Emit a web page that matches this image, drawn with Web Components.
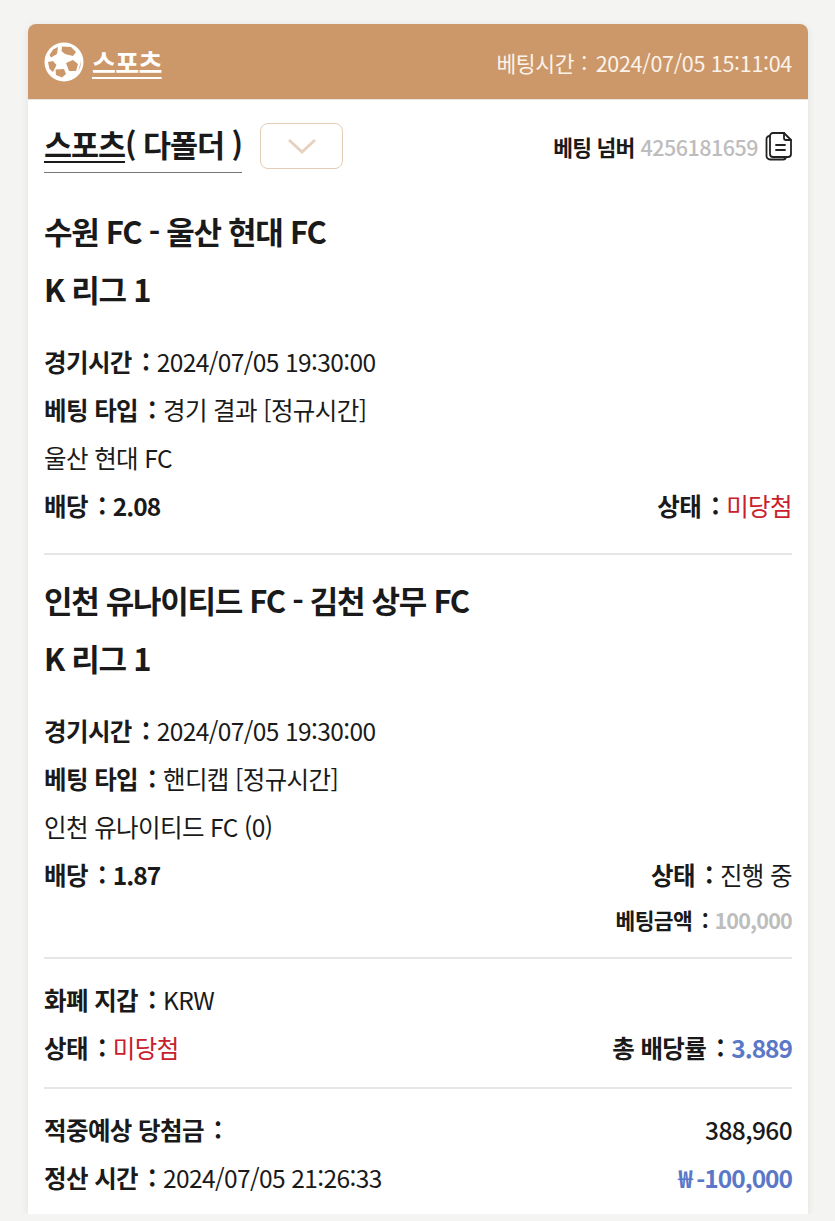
<!DOCTYPE html>
<html lang="ko">
<head>
<meta charset="utf-8">
<style>
  html, body { margin: 0; padding: 0; background: #f4f4f3; }
  body { font-family: "Noto Sans CJK KR", "Noto Sans", sans-serif; color: #1a1a1a; }
  bet-card { margin: 24px 27px 0 28px; }
  .c { margin: 0 1px 0 4px; font-weight: 700; }
  .red { color: #c8202c; }
  .blue { color: #5b78c8; font-weight: 700; letter-spacing: -1px; }
  .grey { color: #bdbdbd; font-weight: 700; letter-spacing: -.8px; }
  .odds { font-weight: 700; letter-spacing: -1px; }
  .med { font-weight: 500; }
</style>
</head>
<body>
<template id="card-tpl">
  <style>
    :host { display: block; background: #fff; border-radius: 8px 8px 0 0; box-shadow: 0 2px 8px rgba(0,0,0,.08); height: 1190px; overflow: hidden; }
    .body { padding: 0 16px; }
  </style>
  <slot name="head"></slot>
  <div class="body"><slot></slot></div>
</template>

<template id="head-tpl">
  <style>
    :host { display: flex; align-items: center; justify-content: space-between; height: 76px; padding: 0 16px; background: #cc9869; color: #fff; border-bottom: 1px solid #e8e6e3; box-sizing: border-box; }
    .left { display: flex; align-items: center; gap: 8px; }
    .name { font-size: 26px; font-weight: 700; letter-spacing: -.7px; text-decoration: underline; text-underline-offset: 4px; text-decoration-thickness: 2px; line-height: 30px; }
    .time { font-size: 21.500px; letter-spacing: -.3px; color: #fbf3ea; white-space: nowrap; padding-top: 1px; }
    svg { width: 40px; height: 40px; display: block; }
  </style>
  <div class="left">
    <svg viewBox="0 0 40 40">
      <circle cx="20" cy="20" r="19.500" fill="#fff"/>
      <g fill="#cc9869">
        <path d="M14 5 L9 7.500 L5.500 13 L7 15.500 L13 12 Z"/>
        <path d="M18 4.500 L27 5 L32 10 L29 14 L21 12 L17.500 9 Z"/>
        <path d="M22 21 L29 18 L34 22 L32 29 L25 29 Z"/>
        <path d="M11.500 27.500 L20 27 L22 32 L18 35.500 L12 33 Z"/>
        <path d="M4 20 L9 19 L12.500 23 L9 30 L5.500 27 Z"/>
        <path d="M36.500 18 L36.500 24 L34 30 L36 23 Z"/>
      </g>
    </svg>
    <span class="name"><slot name="title"></slot></span>
  </div>
  <span class="time"><slot name="time"></slot></span>
</template>

<template id="top-tpl">
  <style>
    :host { display: flex; align-items: flex-start; justify-content: space-between; padding-top: 23px; height: 79px; }
    .left { display: flex; align-items: flex-start; gap: 18px; }
    .kind { font-size: 30.500px; font-weight: 700; letter-spacing: -1.050px; line-height: 42px; padding-bottom: 7px; border-bottom: 1px solid #777; white-space: nowrap; }
    .kind u { text-underline-offset: 4px; text-decoration-thickness: 2px; }
    .drop { width: 83px; height: 46px; border: 1.500px solid #e4cdb5; border-radius: 8px; box-sizing: border-box; display: flex; align-items: center; justify-content: center; }
    .drop svg { width: 30px; height: 18px; display: block; }
    .right { display: flex; align-items: center; gap: 7px; height: 46px; font-size: 21.500px; font-weight: 700; letter-spacing: -.8px; white-space: nowrap; }
    .num { color: #bdbdbd; font-weight: 500; margin-left: 6px; letter-spacing: -.5px; }
    .right svg { width: 28px; height: 30px; display: block; margin-right: -1px; }
  </style>
  <div class="left">
    <div class="kind"><u>스포츠</u>( 다폴더 )</div>
    <div class="drop"><svg viewBox="0 0 30 18"><path d="M2 3 L15 15 L28 3" fill="none" stroke="#e6d2be" stroke-width="3"/></svg></div>
  </div>
  <div class="right">
    <span>베팅 넘버<span class="num"><slot></slot></span></span>
    <svg viewBox="0 0 28 30" fill="none" stroke="#222" stroke-width="1.800" stroke-linejoin="round" stroke-linecap="round">
      <path d="M8 2 H19 L26 9 V23 A3 3 0 0 1 23 26 H8 A3 3 0 0 1 5 23 V5 A3 3 0 0 1 8 2 Z"/>
      <path d="M19 2 V7 A2 2 0 0 0 21 9 H26"/>
      <path d="M5 5 H4.500 A3 3 0 0 0 1.500 8 V25 A3.500 3.500 0 0 0 5 28.500 H18 A3 3 0 0 0 21 26"/>
      <path d="M11 14 H20 M11 19 H20"/>
    </svg>
  </div>
</template>

<template id="game-tpl">
  <style>
    :host { display: block; }
    .title { font-size: 31px; font-weight: 700; letter-spacing: -1.300px; line-height: 57.500px; white-space: nowrap; }
    .rows { margin-top: 20px; }
  </style>
  <div class="title"><slot name="match"></slot></div>
  <div class="title"><slot name="league"></slot></div>
  <div class="rows"><slot></slot></div>
</template>

<template id="row-tpl">
  <style>
    :host { display: flex; justify-content: space-between; align-items: center; height: 48px; font-size: 24.500px; letter-spacing: -.6px; white-space: nowrap; }
  </style>
  <span><slot></slot></span>
  <span><slot name="end"></slot></span>
</template>

<template id="rule-tpl">
  <style>
    :host { display: block; height: 2px; background: #e6e6e6; }
  </style>
</template>

<bet-card>
  <bet-head slot="head">
    <span slot="title">스포츠</span>
    <span slot="time">베팅시간<span style="margin:0 3px 0 7px">:</span> 2024/07/05 15:11:04</span>
  </bet-head>
  <bet-top>4256181659</bet-top>

  <bet-game>
    <span slot="match">수원 FC - 울산 현대 FC</span>
    <span slot="league">K 리그 1</span>
    <bet-row><b>경기시간</b> <span class="c">:</span> 2024/07/05 19:30:00</bet-row>
    <bet-row><b>베팅 타입</b> <span class="c">:</span> 경기 결과 [정규시간]</bet-row>
    <bet-row>울산 현대 FC</bet-row>
    <bet-row><b>배당</b> <span class="c">:</span> <span class="odds">2.08</span><span slot="end"><b>상태</b> <span class="c">:</span> <span class="red">미당첨</span></span></bet-row>
  </bet-game>
  <bet-rule style="margin-top:24px"></bet-rule>

  <bet-game style="margin-top:16px">
    <span slot="match">인천 유나이티드 FC - 김천 상무 FC</span>
    <span slot="league">K 리그 1</span>
    <bet-row><b>경기시간</b> <span class="c">:</span> 2024/07/05 19:30:00</bet-row>
    <bet-row><b>베팅 타입</b> <span class="c">:</span> 핸디캡 [정규시간]</bet-row>
    <bet-row>인천 유나이티드 FC (0)</bet-row>
    <bet-row><b>배당</b> <span class="c">:</span> <span class="odds">1.87</span><span slot="end"><b>상태</b> <span class="c">:</span> 진행 중</span></bet-row>
  </bet-game>
  <bet-row style="font-size:21.500px;height:42px"><span slot="end"><b>베팅금액</b> <span class="c">:</span> <span class="grey">100,000</span></span></bet-row>
  <bet-rule style="margin-top:17px"></bet-rule>

  <bet-row style="margin-top:16px"><b>화폐 지갑</b> <span class="c">:</span> KRW</bet-row>
  <bet-row><b>상태</b> <span class="c">:</span> <span class="red">미당첨</span><span slot="end"><b>총 배당률</b> <span class="c">:</span> <span class="blue">3.889</span></span></bet-row>
  <bet-rule style="margin-top:16px"></bet-rule>

  <bet-row style="margin-top:16px"><b>적중예상 당첨금</b> <span class="c">:</span><span slot="end" class="med">388,960</span></bet-row>
  <bet-row><b>정산 시간</b> <span class="c">:</span> 2024/07/05 21:26:33<span slot="end" class="blue">₩ -100,000</span></bet-row>
</bet-card>

<script>
  // each tag just stamps its own template into an open shadow root
  const tags = { 'bet-card': 'card-tpl', 'bet-head': 'head-tpl', 'bet-top': 'top-tpl', 'bet-game': 'game-tpl', 'bet-row': 'row-tpl', 'bet-rule': 'rule-tpl' };
  Object.keys(tags).forEach(name => {
    customElements.define(name, class extends HTMLElement {
      constructor() {
        super();
        this.attachShadow({ mode: 'open' }).append(document.getElementById(tags[name]).content.cloneNode(true));
      }
    });
  });
</script>
</body>
</html>
